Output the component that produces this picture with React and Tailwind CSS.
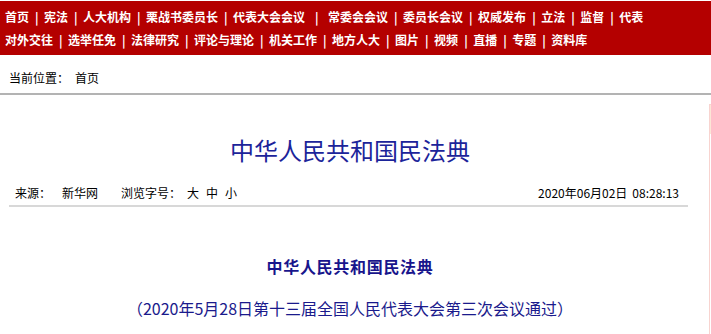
import React from "react";

const navRows = [
  [
    "首页",
    "宪法",
    "人大机构",
    "栗战书委员长",
    "代表大会会议",
    "常委会会议",
    "委员长会议",
    "权威发布",
    "立法",
    "监督",
    "代表",
  ],
  [
    "对外交往",
    "选举任免",
    "法律研究",
    "评论与理论",
    "机关工作",
    "地方人大",
    "图片",
    "视频",
    "直播",
    "专题",
    "资料库",
  ],
];

const NavRow = ({ items }) => (
  <div className="flex h-[23px] items-center whitespace-nowrap leading-[23px]">
    {items.map((item, i) => (
      <React.Fragment key={item}>
        {i > 0 && (
          <span
            className={
              item === "常委会会议"
                ? "mx-[10px] inline-block w-[3px] text-center"
                : "mx-[6px] inline-block w-[3px] text-center"
            }
          >
            |
          </span>
        )}
        <a href="#" className="text-white">
          {item}
        </a>
      </React.Fragment>
    ))}
  </div>
);

export default function App() {
  return (
    <div className="h-[334px] w-[711px] overflow-hidden bg-white font-['Noto_Sans_CJK_SC',sans-serif] text-black">
      {/* top nav */}
      <div className="mt-px bg-[#b40000] pb-[4px] pl-[5px] pt-[4px] text-[12px] font-bold text-white">
        {navRows.map((row, i) => (
          <NavRow key={i} items={row} />
        ))}
      </div>

      {/* breadcrumb */}
      <div className="pb-[8px] pl-[9px] pt-[16px] text-[12px] leading-[14px]">
        当前位置：<span className="ml-[6px]">首页</span>
      </div>
      <div className="h-[2px] bg-[#b3b3b3]" />

      <div className="flex">
        <div className="w-[700px] shrink-0">
          <h1 className="pt-[40px] text-center text-[24px] font-normal leading-[30px] text-[#1c249a]">
            中华人民共和国民法典
          </h1>

          <div className="ml-[9px] mr-[12px] mt-[20px] flex items-center justify-between border-b-2 border-[#d8d8d8] pb-[4px] pl-[6px] pr-[9px] text-[12px] leading-[16px]">
            <div className="flex items-center">
              <span>来源：</span>
              <span className="ml-[11px]">新华网</span>
              <span className="ml-[23px]">浏览字号：</span>
              <span className="ml-[6px] flex gap-[7px]">
                <a href="#">大</a>
                <a href="#">中</a>
                <a href="#">小</a>
              </span>
            </div>
            <span>
              2020年06月02日<span className="ml-[5px]">08:28:13</span>
            </span>
          </div>

          <div className="mt-[47px] text-center text-[16px] font-bold leading-[24px] tracking-[0.7px] text-[#18158c]">
            中华人民共和国民法典
          </div>
          <div className="mt-[18px] text-center text-[16px] leading-[24px] text-[#1a1a8c]">
            （2020年5月28日第十三届全国人民代表大会第三次会议通过）
          </div>
        </div>

        {/* right floating panel edge */}
        <div className="ml-[9px] mt-[9px] h-[260px] flex-1 border-l border-t border-[#f8d4d0]">
          <div className="h-[29px] w-[2px] bg-[#fce6d6]" />
        </div>
      </div>
    </div>
  );
}
